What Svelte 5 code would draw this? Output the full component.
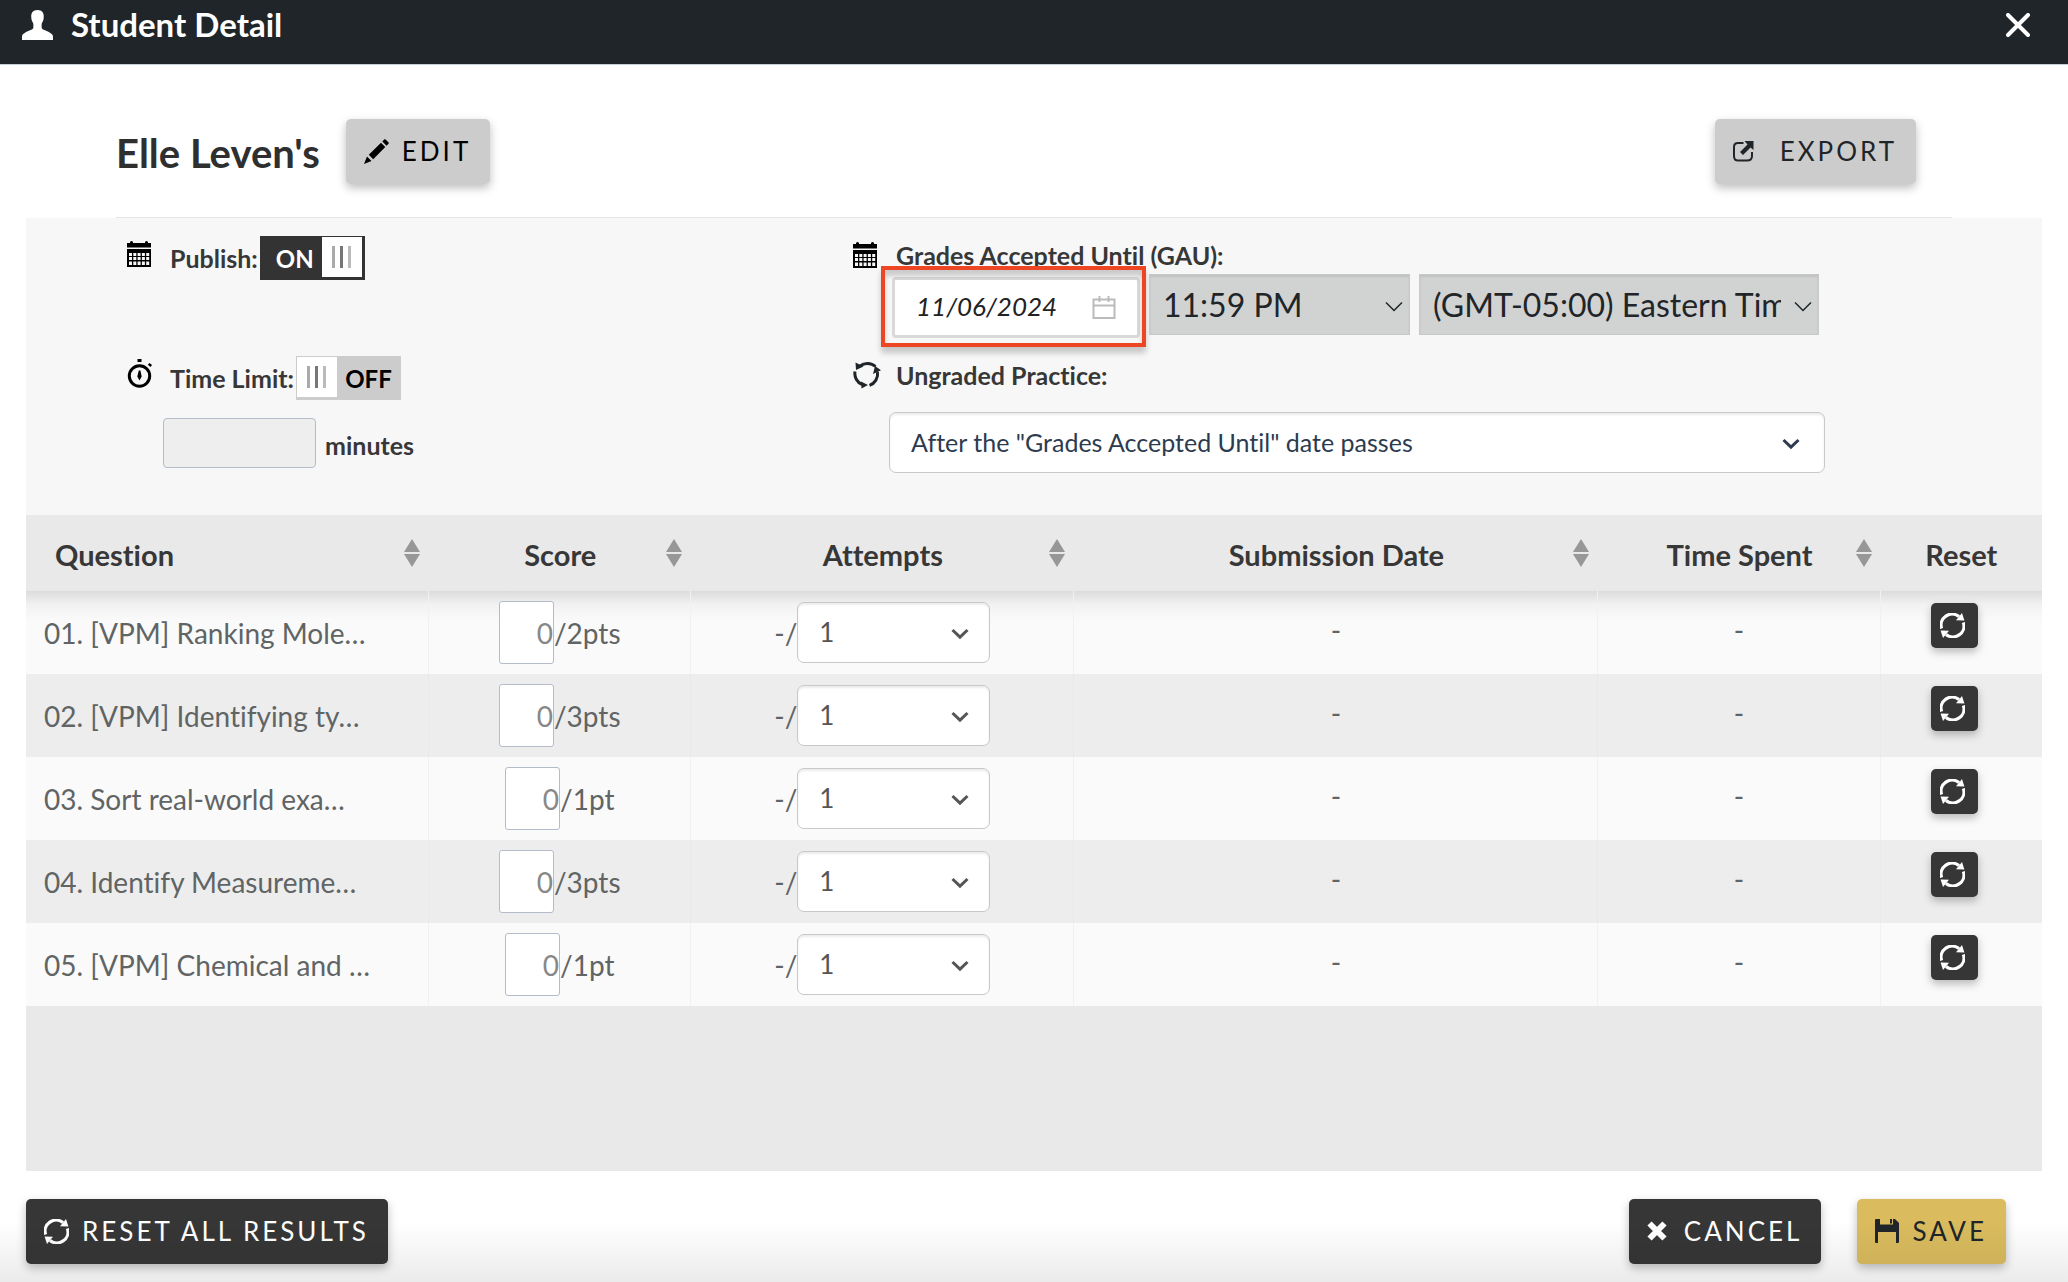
<script>
	let published = true;
	let timeLimited = false;
	let minutes = '';
	let acceptedUntil = '11/06/2024';

	const columns = [
		{ name: 'Question', key: 'question', sortable: true },
		{ name: 'Score', key: 'score', sortable: true },
		{ name: 'Attempts', key: 'attempts', sortable: true },
		{ name: 'Submission Date', key: 'submitted', sortable: true },
		{ name: 'Time Spent', key: 'spent', sortable: true },
		{ name: 'Reset', key: 'reset', sortable: false }
	];

	let questions = [
		{ title: '01. [VPM] Ranking Mole…', score: 0, points: '2pts', attempts: '1' },
		{ title: '02. [VPM] Identifying ty…', score: 0, points: '3pts', attempts: '1' },
		{ title: '03. Sort real-world exa…', score: 0, points: '1pt', attempts: '1' },
		{ title: '04. Identify Measureme…', score: 0, points: '3pts', attempts: '1' },
		{ title: '05. [VPM] Chemical and …', score: 0, points: '1pt', attempts: '1' }
	];

	function resetQuestion(index) {
		questions[index].score = 0;
		questions[index].attempts = '1';
	}

	function resetAll() {
		questions.forEach((_, index) => resetQuestion(index));
	}
</script>

{#snippet refreshIcon()}
	<svg width="25" height="25" viewBox="0 0 25 25" aria-hidden="true">
		{#each [0, 180] as angle}
			<g transform="rotate({angle} 12.5 12.5)">
				<path d="M1.6 15.5A11 11 0 0 1 19 3.6" fill="none" stroke="currentColor" stroke-width="3.2" />
				<path d="M16 7.2 24.4 7.4 22 0Z" fill="currentColor" />
			</g>
		{/each}
	</svg>
{/snippet}

{#snippet calendarIcon()}
	<svg class="field-icon" width="28" height="26" viewBox="0 0 28 26" aria-hidden="true">
		<path d="M0 2h3V1q1.5-2 3 0v1h12V1q1.5-2 3 0v1h3v4.5H0Z" />
		<path d="M0 8h24v18H0Z" />
		{#each [2, 6.3, 10.6, 14.9, 19.2] as x}
			<path d="M{x} 12h3v3h-3ZM{x} 16h3v3h-3ZM{x} 20.5h3V24h-3Z" fill="#f7f7f7" />
		{/each}
	</svg>
{/snippet}

{#snippet chevron(thin)}
	<svg class="chevron" width="18" height="12" viewBox="0 0 18 12" aria-hidden="true">
		<path
			d={thin ? 'M1 1.5 9 9.5 17 1.5' : 'M1.5 2 9 9.2 16.5 2'}
			fill="none"
			stroke="currentColor"
			stroke-width={thin ? 1.5 : 3}
		/>
	</svg>
{/snippet}

<div class="page">
	<header class="titlebar">
		<svg width="31" height="30" viewBox="0 0 30 30" preserveAspectRatio="none" aria-hidden="true">
			<path
				d="M15 0c-4.5 0-6.5 3-6 7.5 0 1.5.3 3 1 4.2.8 1.2 1 2 1 3.3v2c0 1.500-.5 2-2 2.700C4 22 0 23.500 0 26.500V30h30v-3.500c0-3-4-4.500-9-6.800-1.500-.7-2-1.200-2-2.700v-2c0-1.300.2-2.100 1-3.300.7-1.200 1-2.700 1-4.200C21.500 3 19.500 0 15 0Z"
				fill="currentColor"
			/>
		</svg>
		<h1>Student Detail</h1>
		<button class="close" aria-label="Close">
			<svg width="24" height="24" viewBox="0 0 24 24" aria-hidden="true">
				<path d="M2 2 22 22M22 2 2 22" stroke="currentColor" stroke-width="4" stroke-linecap="round" />
			</svg>
		</button>
	</header>

	<div class="student">
		<h2>Elle Leven's</h2>
		<button class="btn btn-light edit">
			<svg width="25" height="25" viewBox="0 0 25 25" aria-hidden="true">
				<path
					d="M0 25 3 17.5 7.5 22ZM4.8 15.8 17 3.7 21.3 8 9.2 20.2ZM18.3 2.4 20.4.3Q21 0 21.6.4L24.6 3.4Q25 4 24.7 4.6L22.6 6.7Z"
					fill="currentColor"
				/>
			</svg>
			EDIT
		</button>
		<button class="btn btn-light export">
			<svg width="21" height="21" viewBox="0 0 21 21" aria-hidden="true">
				<path d="M10.5 2H5Q1 2 1 6v9q0 4.5 4 4.5h9q5 0 5-4.5v-4" fill="none" stroke="currentColor" stroke-width="2" />
				<path d="M11.5 0H20.5V9L17.5 6.5 10 14 7 11 14.5 3.5Z" fill="currentColor" />
			</svg>
			EXPORT
		</button>
	</div>

	<main class="panel">
		<section class="settings">
			<div class="column">
				<div class="toggle-row">
					{@render calendarIcon()}
					<label for="publish">Publish:</label>
					<span class="switch" class:on={published}>
						<input id="publish" type="checkbox" bind:checked={published} />
						<span class="state">{published ? 'ON' : 'OFF'}</span>
						<span class="knob"><i></i><i></i><i></i></span>
					</span>
				</div>
				<div class="toggle-row">
					<svg class="field-icon" width="28" height="30" viewBox="0 0 28 30" aria-hidden="true">
						<circle cx="12.5" cy="17" r="10.2" fill="none" stroke="#000" stroke-width="3" />
						<path d="M10.5 0h4v3h-4ZM20.8 5.8 22.5 4 25 6 23.5 8ZM11.8 11.5h1.6l1.3 6-2.2 4-2.2-4Z" />
					</svg>
					<label for="time-limit">Time Limit:</label>
					<span class="switch" class:on={timeLimited}>
						<input id="time-limit" type="checkbox" bind:checked={timeLimited} />
						<span class="state">{timeLimited ? 'ON' : 'OFF'}</span>
						<span class="knob"><i></i><i></i><i></i></span>
					</span>
				</div>
				<div class="minutes">
					<input id="minutes" type="text" disabled={!timeLimited} bind:value={minutes} />
					<label for="minutes">minutes</label>
				</div>
			</div>

			<div class="column">
				<div class="field-label">
					{@render calendarIcon()}
					<label for="gau">Grades Accepted Until (GAU):</label>
				</div>
				<div class="gau">
					<div class="date">
						<input id="gau" type="text" bind:value={acceptedUntil} />
						<button aria-label="Open calendar">
							<svg width="24" height="24" viewBox="0 0 24 24" aria-hidden="true">
								<path d="M1.5 3.5h21V22h-21ZM1 9.5h22M7.5 0v6M16.5 0v6" fill="none" stroke="currentColor" stroke-width="2" />
							</svg>
						</button>
					</div>
					<div class="select plain time">
						<select aria-label="Time">
							<option>11:59 PM</option>
						</select>
						{@render chevron(true)}
					</div>
					<div class="select plain zone">
						<select aria-label="Time zone">
							<option>(GMT-05:00) Eastern Time (US &amp; Canada)</option>
						</select>
						{@render chevron(true)}
					</div>
				</div>
				<div class="field-label practice-label">
					<svg class="field-icon" width="28" height="28" viewBox="0 0 28 28" aria-hidden="true">
						<g fill="none" stroke="#1f2528" stroke-width="3">
							<path d="M22.5 5.5A12 12 0 0 0 7 5" />
							<path d="M2 10.5A12 12 0 0 0 9 23.5" />
							<path d="M16.5 24.3A12 12 0 0 0 24.5 11" />
						</g>
						<path d="M2.5 1.5 3 9 10.5 5.5ZM8 20.5 15 24 8.5 27.5ZM22 5 28 9.3 20 13Z" fill="#1f2528" />
					</svg>
					<label for="practice">Ungraded Practice:</label>
				</div>
				<div class="select practice">
					<select id="practice">
						<option>After the "Grades Accepted Until" date passes</option>
					</select>
					{@render chevron(false)}
				</div>
			</div>
		</section>

		<table>
			<thead>
				<tr>
					{#each columns as column}
						<th class={column.key}>
							<div class="heading">
								<span>{column.name}</span>
								{#if column.sortable}
									<button class="sort" aria-label="Sort by {column.name}">
										<svg width="16" height="28" viewBox="0 0 16 28" aria-hidden="true">
											<path d="M8 0 16 13H0ZM0 15H16L8 28Z" fill="currentColor" />
										</svg>
									</button>
								{/if}
							</div>
						</th>
					{/each}
				</tr>
			</thead>
			<tbody>
				{#each questions as question, index}
					<tr>
						<td class="question">{question.title}</td>
						<td>
							<div class="cell">
								<input class="score-input" type="text" aria-label="Score" bind:value={question.score} />
								<span>/{question.points}</span>
							</div>
						</td>
						<td>
							<div class="cell">
								<span>-/</span>
								<div class="select attempts-select">
									<select aria-label="Attempts" bind:value={question.attempts}>
										<option>1</option>
										<option>2</option>
										<option>3</option>
									</select>
									{@render chevron(false)}
								</div>
							</div>
						</td>
						<td class="dash">-</td>
						<td class="dash">-</td>
						<td class="reset-cell">
							<button class="reset" aria-label="Reset question" on:click={() => resetQuestion(index)}>
								{@render refreshIcon()}
							</button>
						</td>
					</tr>
				{/each}
			</tbody>
		</table>
	</main>

	<footer>
		<button class="btn btn-dark" on:click={resetAll}>
			{@render refreshIcon()}
			RESET ALL RESULTS
		</button>
		<button class="btn btn-dark cancel">
			<svg width="20" height="20" viewBox="0 0 20 20" aria-hidden="true">
				<path d="M2.5 2.5 17.5 17.5M17.5 2.5 2.5 17.5" stroke="currentColor" stroke-width="6" />
			</svg>
			CANCEL
		</button>
		<button class="btn btn-save">
			<svg width="24" height="24" viewBox="0 0 24 24" aria-hidden="true">
				<path
					d="M0 1Q0 0 1 0H5V5.5H18V0H20L24 4V23Q24 24 23 24H21V13H3V24H1Q0 24 0 23ZM15 0H17V4.5H15Z"
					fill="currentColor"
				/>
			</svg>
			SAVE
		</button>
	</footer>
</div>

<style>
	:global(body) {
		margin: 0;
		background: #fff;
	}

	.page {
		display: flex;
		flex-direction: column;
		min-height: 100vh;
		color: #373737;
		font-family: Lato, 'Liberation Sans', sans-serif;
		font-size: 28px;
		font-variant-ligatures: none;
	}

	h1,
	h2 {
		margin: 0;
		font-weight: 700;
	}

	svg {
		flex: none;
		display: block;
	}

	button,
	input,
	select {
		box-sizing: border-box;
		margin: 0;
		padding: 0;
		border: none;
		border-radius: 0;
		background: none;
		color: inherit;
		font: inherit;
		font-variant-ligatures: none;
	}

	button {
		cursor: pointer;
	}

	.titlebar {
		display: flex;
		align-items: center;
		gap: 18px;
		box-sizing: border-box;
		height: 65px;
		padding: 0 38px 14px 22px;
		border-bottom: 1px solid #c5ccd3;
		background: #1f2528;
		color: #fff;
	}

	.titlebar h1 {
		padding-bottom: 2px;
		font-size: 33px;
		line-height: 38px;
	}

	.close {
		margin-left: auto;
	}

	.student {
		display: flex;
		align-items: center;
		height: 65px;
		margin: 0 116px;
		padding: 54px 36px 33px 0;
		border-bottom: 1px solid #e5e5e5;
	}

	.student h2 {
		margin-right: 26px;
		padding-top: 2px;
		color: #2f2f2f;
		font-size: 40px;
		line-height: 48px;
	}

	.btn {
		display: flex;
		align-items: center;
		gap: 13px;
		height: 65px;
		padding: 0 19px 1px 18px;
		border-radius: 5px;
		box-shadow: 0 4px 10px rgba(0, 0, 0, 0.26);
		font-size: 26px;
		letter-spacing: 3px;
		white-space: nowrap;
	}

	.btn-light {
		background: #ccc;
		color: #1f2528;
	}

	.btn-dark {
		background: #363636;
		color: #fff;
	}

	.btn-save {
		background: #dabc5e;
		color: #1f2528;
	}

	.edit {
		color: #000;
	}

	.export {
		gap: 26px;
		margin-left: auto;
	}

	.panel {
		flex: 1;
		margin: 0 26px;
		background: #e9e9e9;
	}

	.settings {
		display: grid;
		grid-template-columns: 726fr 972fr;
		box-sizing: border-box;
		min-height: 297px;
		padding: 18px 217px 0 101px;
		background: #f7f7f7;
		font-size: 25px;
	}

	.settings label {
		padding-bottom: 1px;
		font-weight: 700;
	}

	.toggle-row {
		display: flex;
		align-items: center;
		height: 44px;
		margin-bottom: 76px;
	}

	.toggle-row + .toggle-row {
		margin-bottom: 18px;
	}

	.field-icon {
		margin-right: 15px;
	}

	.toggle-row .field-icon {
		margin-bottom: 8px;
	}

	.switch {
		position: relative;
		display: flex;
		flex-direction: row-reverse;
		align-items: center;
		justify-content: flex-end;
		box-sizing: border-box;
		width: 105px;
		height: 44px;
		margin-left: 2px;
		padding: 1px 1px 3px;
		background: #ccc;
		color: #000;
		font-size: 24px;
	}

	.switch.on {
		flex-direction: row;
		padding-right: 3px;
		background: #333;
		color: #fff;
	}

	.switch input {
		position: absolute;
		inset: 0;
		opacity: 0;
	}

	.state {
		flex: 1;
		padding-top: 2px;
		text-align: center;
		font-weight: 700;
	}

	.switch.on .state {
		padding-left: 7px;
	}

	.knob {
		display: flex;
		align-items: center;
		justify-content: center;
		gap: 5px;
		width: 40px;
		height: 40px;
		background: #fff;
	}

	.knob i {
		width: 3px;
		height: 22px;
		background: #aaa;
	}

	.knob i + i {
		background: #777;
	}

	.knob i + i + i {
		background: #bbb;
	}

	.minutes {
		display: flex;
		align-items: center;
		gap: 9px;
		margin-left: 36px;
	}

	.minutes input {
		width: 153px;
		height: 50px;
		border: 1px solid #b3bcc8;
		border-radius: 4px;
		background: #eee;
	}

	.minutes label {
		padding-top: 5px;
	}

	.field-label {
		display: flex;
		align-items: center;
		height: 38px;
	}

	.gau {
		display: flex;
		gap: 9px;
		margin-left: 39px;
	}

	.date {
		position: relative;
		display: flex;
		align-items: center;
		box-sizing: border-box;
		width: 248px;
		height: 61px;
		margin-top: 3px;
		padding-right: 21px;
		border: 3px solid #d9d9d9;
		border-radius: 4px;
		background: #fff;
		color: #222;
	}

	/* highlight frame around the date field */
	.date::after {
		content: '';
		position: absolute;
		inset: -14px -9px -12px -14px;
		border: 4px solid #ee4523;
		box-shadow:
			0 6px 6px rgba(0, 0, 0, 0.2),
			inset 0 6px 5px rgba(0, 0, 0, 0.18);
		pointer-events: none;
	}

	.date input {
		flex: 1;
		min-width: 0;
		height: 100%;
		padding: 0 0 3px 21px;
		font-size: 26px;
		font-style: italic;
	}

	.date button {
		color: #bbb;
	}

	.select {
		position: relative;
	}

	.select select {
		display: block;
		width: 100%;
		height: 61px;
		padding: 0 38px 1px 21px;
		border: 1px solid #c8c8c8;
		border-radius: 7px;
		background: #fff;
		box-shadow: inset 0 2px 2px rgba(0, 0, 0, 0.08);
		appearance: none;
	}

	.chevron {
		position: absolute;
		top: 50%;
		right: 25px;
		margin-top: -5px;
		pointer-events: none;
	}

	.select.plain {
		color: #1f2528;
		font-size: 32px;
	}

	.select.plain select {
		padding: 0 37px 0 13px;
		border-radius: 0;
		background: #d1d3d2;
	}

	.plain .chevron {
		right: 7px;
	}

	.time {
		flex: 261;
		min-width: 0;
	}

	.zone {
		flex: 400;
		min-width: 0;
		margin-right: 6px;
	}

	.practice-label {
		height: 74px;
	}

	.practice {
		margin-left: 36px;
		color: #2d3b4f;
	}

	table {
		width: 100%;
		border-spacing: 0;
		table-layout: fixed;
	}

	th,
	td {
		padding: 0;
		line-height: 34px;
	}

	th {
		height: 76px;
		background: #e9e9e9;
		font-size: 29px;
		font-weight: 700;
	}

	th.question {
		width: 20%;
	}

	th.score {
		width: 13%;
	}

	th.attempts {
		width: 19%;
	}

	th.submitted {
		width: 26%;
	}

	th.spent {
		width: 14%;
	}

	th.reset {
		width: 8%;
	}

	.heading {
		display: grid;
		grid-template-columns: 25px 1fr 25px;
		align-items: center;
	}

	.heading span {
		grid-column: 2;
		padding-top: 4px;
		white-space: nowrap;
	}

	.question .heading span {
		padding-left: 4px;
		text-align: left;
	}

	.sort {
		width: 16px;
		color: #979797;
	}

	td {
		box-sizing: border-box;
		height: 83px;
		border-right: 1px solid #f1f1f1;
		background: #fafafa;
		color: #606464;
		text-align: center;
	}

	td:last-child {
		border-right: none;
	}

	tbody tr:nth-child(even) td {
		border-color: #e9e9e9;
		background: #ededed;
	}

	tbody tr:first-child td {
		background: linear-gradient(rgba(0, 0, 0, 0.12), rgba(0, 0, 0, 0.03) 14px, transparent 30px) #fafafa;
	}

	td.question {
		padding-left: 18px;
		text-align: left;
	}

	.cell {
		display: flex;
		align-items: center;
		justify-content: center;
	}

	.score-input {
		width: 55px;
		height: 63px;
		border: 1px solid #b3bcc8;
		border-radius: 3px;
		background: #fff;
		color: #888;
		text-align: right;
	}

	.attempts-select {
		width: 193px;
		font-size: 26px;
		color: #555;
	}

	.attempts-select .chevron {
		right: 21px;
	}

	td.dash {
		padding-bottom: 6px;
	}

	td.reset-cell {
		padding: 12px 14px 0 0;
		vertical-align: top;
	}

	button.reset {
		display: inline-flex;
		align-items: center;
		justify-content: center;
		width: 47px;
		height: 45px;
		padding-right: 4px;
		border-radius: 5px;
		background: #363636;
		box-shadow: 0 4px 8px rgba(0, 0, 0, 0.26);
		color: #fff;
	}

	footer {
		position: relative;
		display: flex;
		box-sizing: border-box;
		height: 111px;
		padding: 28px 62px 0 26px;
	}

	/* soft fade along the bottom edge of the dialog */
	footer::after {
		content: '';
		position: absolute;
		inset: 50px 0 0;
		background: linear-gradient(transparent, rgba(0, 0, 0, 0.08));
		pointer-events: none;
	}

	.cancel {
		gap: 17px;
		margin: 0 36px 0 auto;
	}
</style>
